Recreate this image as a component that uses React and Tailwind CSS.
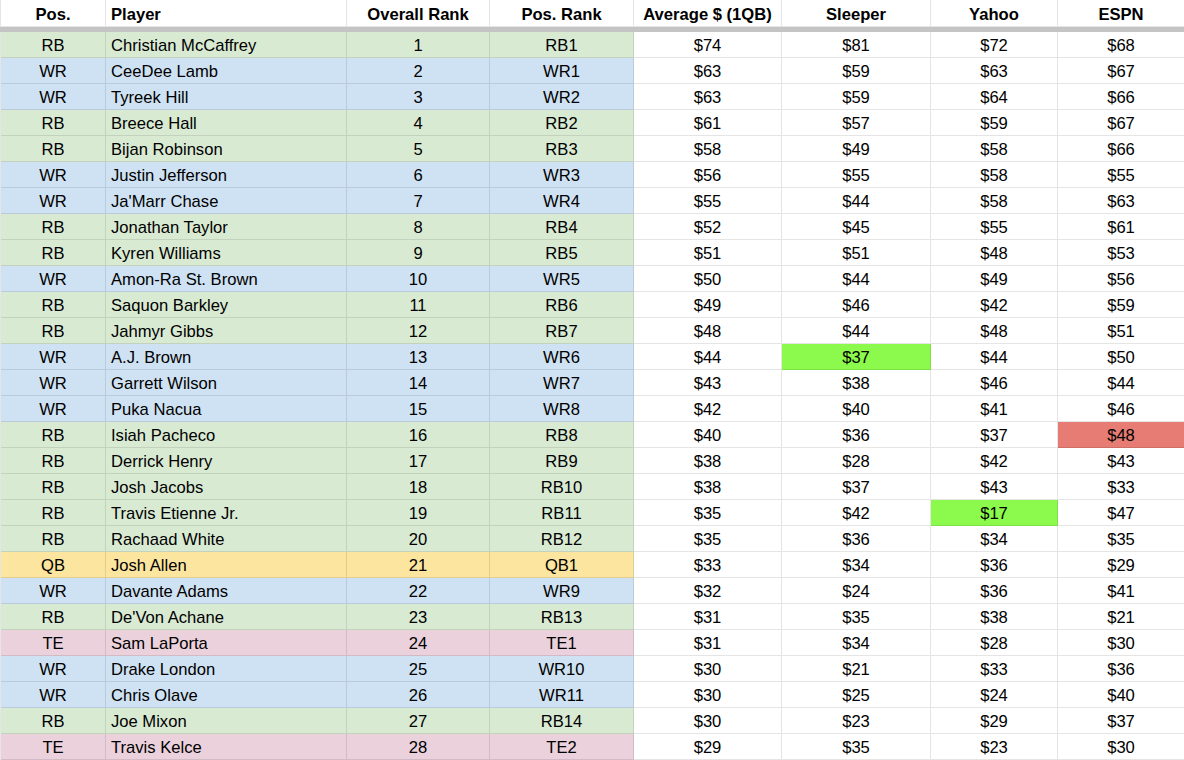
const COLS = [
  { label: "Pos.", w: "w-[105px]" },
  { label: "Player", w: "w-[241px]", left: true },
  { label: "Overall Rank", w: "w-[143px]" },
  { label: "Pos. Rank", w: "w-[144px]" },
  { label: "Average $ (1QB)", w: "w-[148px]" },
  { label: "Sleeper", w: "w-[149px]" },
  { label: "Yahoo", w: "w-[127px]" },
  { label: "ESPN", w: "w-[127px]" },
];

const POS_BG = {
  RB: "bg-[#d9ead3]",
  WR: "bg-[#cfe2f3]",
  QB: "bg-[#fce59f]",
  TE: "bg-[#ead1dc]",
};

// pos, player, posRank, avg, sleeper, yahoo, espn, highlight
const ROWS = [
  ["RB", "Christian McCaffrey", "RB1", 74, 81, 72, 68],
  ["WR", "CeeDee Lamb", "WR1", 63, 59, 63, 67],
  ["WR", "Tyreek Hill", "WR2", 63, 59, 64, 66],
  ["RB", "Breece Hall", "RB2", 61, 57, 59, 67],
  ["RB", "Bijan Robinson", "RB3", 58, 49, 58, 66],
  ["WR", "Justin Jefferson", "WR3", 56, 55, 58, 55],
  ["WR", "Ja'Marr Chase", "WR4", 55, 44, 58, 63],
  ["RB", "Jonathan Taylor", "RB4", 52, 45, 55, 61],
  ["RB", "Kyren Williams", "RB5", 51, 51, 48, 53],
  ["WR", "Amon-Ra St. Brown", "WR5", 50, 44, 49, 56],
  ["RB", "Saquon Barkley", "RB6", 49, 46, 42, 59],
  ["RB", "Jahmyr Gibbs", "RB7", 48, 44, 48, 51],
  ["WR", "A.J. Brown", "WR6", 44, 37, 44, 50, { sleeper: "lime" }],
  ["WR", "Garrett Wilson", "WR7", 43, 38, 46, 44],
  ["WR", "Puka Nacua", "WR8", 42, 40, 41, 46],
  ["RB", "Isiah Pacheco", "RB8", 40, 36, 37, 48, { espn: "red" }],
  ["RB", "Derrick Henry", "RB9", 38, 28, 42, 43],
  ["RB", "Josh Jacobs", "RB10", 38, 37, 43, 33],
  ["RB", "Travis Etienne Jr.", "RB11", 35, 42, 17, 47, { yahoo: "lime" }],
  ["RB", "Rachaad White", "RB12", 35, 36, 34, 35],
  ["QB", "Josh Allen", "QB1", 33, 34, 36, 29],
  ["WR", "Davante Adams", "WR9", 32, 24, 36, 41],
  ["RB", "De'Von Achane", "RB13", 31, 35, 38, 21],
  ["TE", "Sam LaPorta", "TE1", 31, 34, 28, 30],
  ["WR", "Drake London", "WR10", 30, 21, 33, 36],
  ["WR", "Chris Olave", "WR11", 30, 25, 24, 40],
  ["RB", "Joe Mixon", "RB14", 30, 23, 29, 37],
  ["TE", "Travis Kelce", "TE2", 29, 35, 23, 30],
];

const HL = { lime: "bg-[#8cfa4c]", red: "bg-[#e67c73]" };

function Cell({ w, left, bg, bold, children }) {
  return (
    <div
      className={`${w} ${bg || "bg-white"} shrink-0 h-full flex items-center pt-[4px] border-r border-b border-black/10 ${
        left ? "justify-start pl-[5px]" : "justify-center"
      } ${bold ? "font-bold" : ""}`}
    >
      {children}
    </div>
  );
}

export default function App() {
  return (
    <div
      className="w-[1184px] h-[760px] overflow-hidden bg-white text-[16.6px] leading-none text-black"
      style={{ fontFamily: '"Liberation Sans", Arial, sans-serif' }}
    >
      {/* header */}
      <div className="flex h-[27px] border-l border-black/10">
        {COLS.map((c) => (
          <Cell key={c.label} w={c.w} left={c.left} bold>
            {c.label}
          </Cell>
        ))}
      </div>
      <div className="h-[5px] bg-[#c4c4c4]" />

      {ROWS.map((r, i) => {
        const [pos, name, posRank, avg, sl, ya, es, hl = {}] = r;
        const bg = POS_BG[pos];
        return (
          <div key={name} className="flex h-[26px] border-l border-black/10">
            <Cell w={COLS[0].w} bg={bg}>{pos}</Cell>
            <Cell w={COLS[1].w} bg={bg} left>{name}</Cell>
            <Cell w={COLS[2].w} bg={bg}>{i + 1}</Cell>
            <Cell w={COLS[3].w} bg={bg}>{posRank}</Cell>
            <Cell w={COLS[4].w}>${avg}</Cell>
            <Cell w={COLS[5].w} bg={HL[hl.sleeper]}>${sl}</Cell>
            <Cell w={COLS[6].w} bg={HL[hl.yahoo]}>${ya}</Cell>
            <Cell w={COLS[7].w} bg={HL[hl.espn]}>${es}</Cell>
          </div>
        );
      })}
    </div>
  );
}
